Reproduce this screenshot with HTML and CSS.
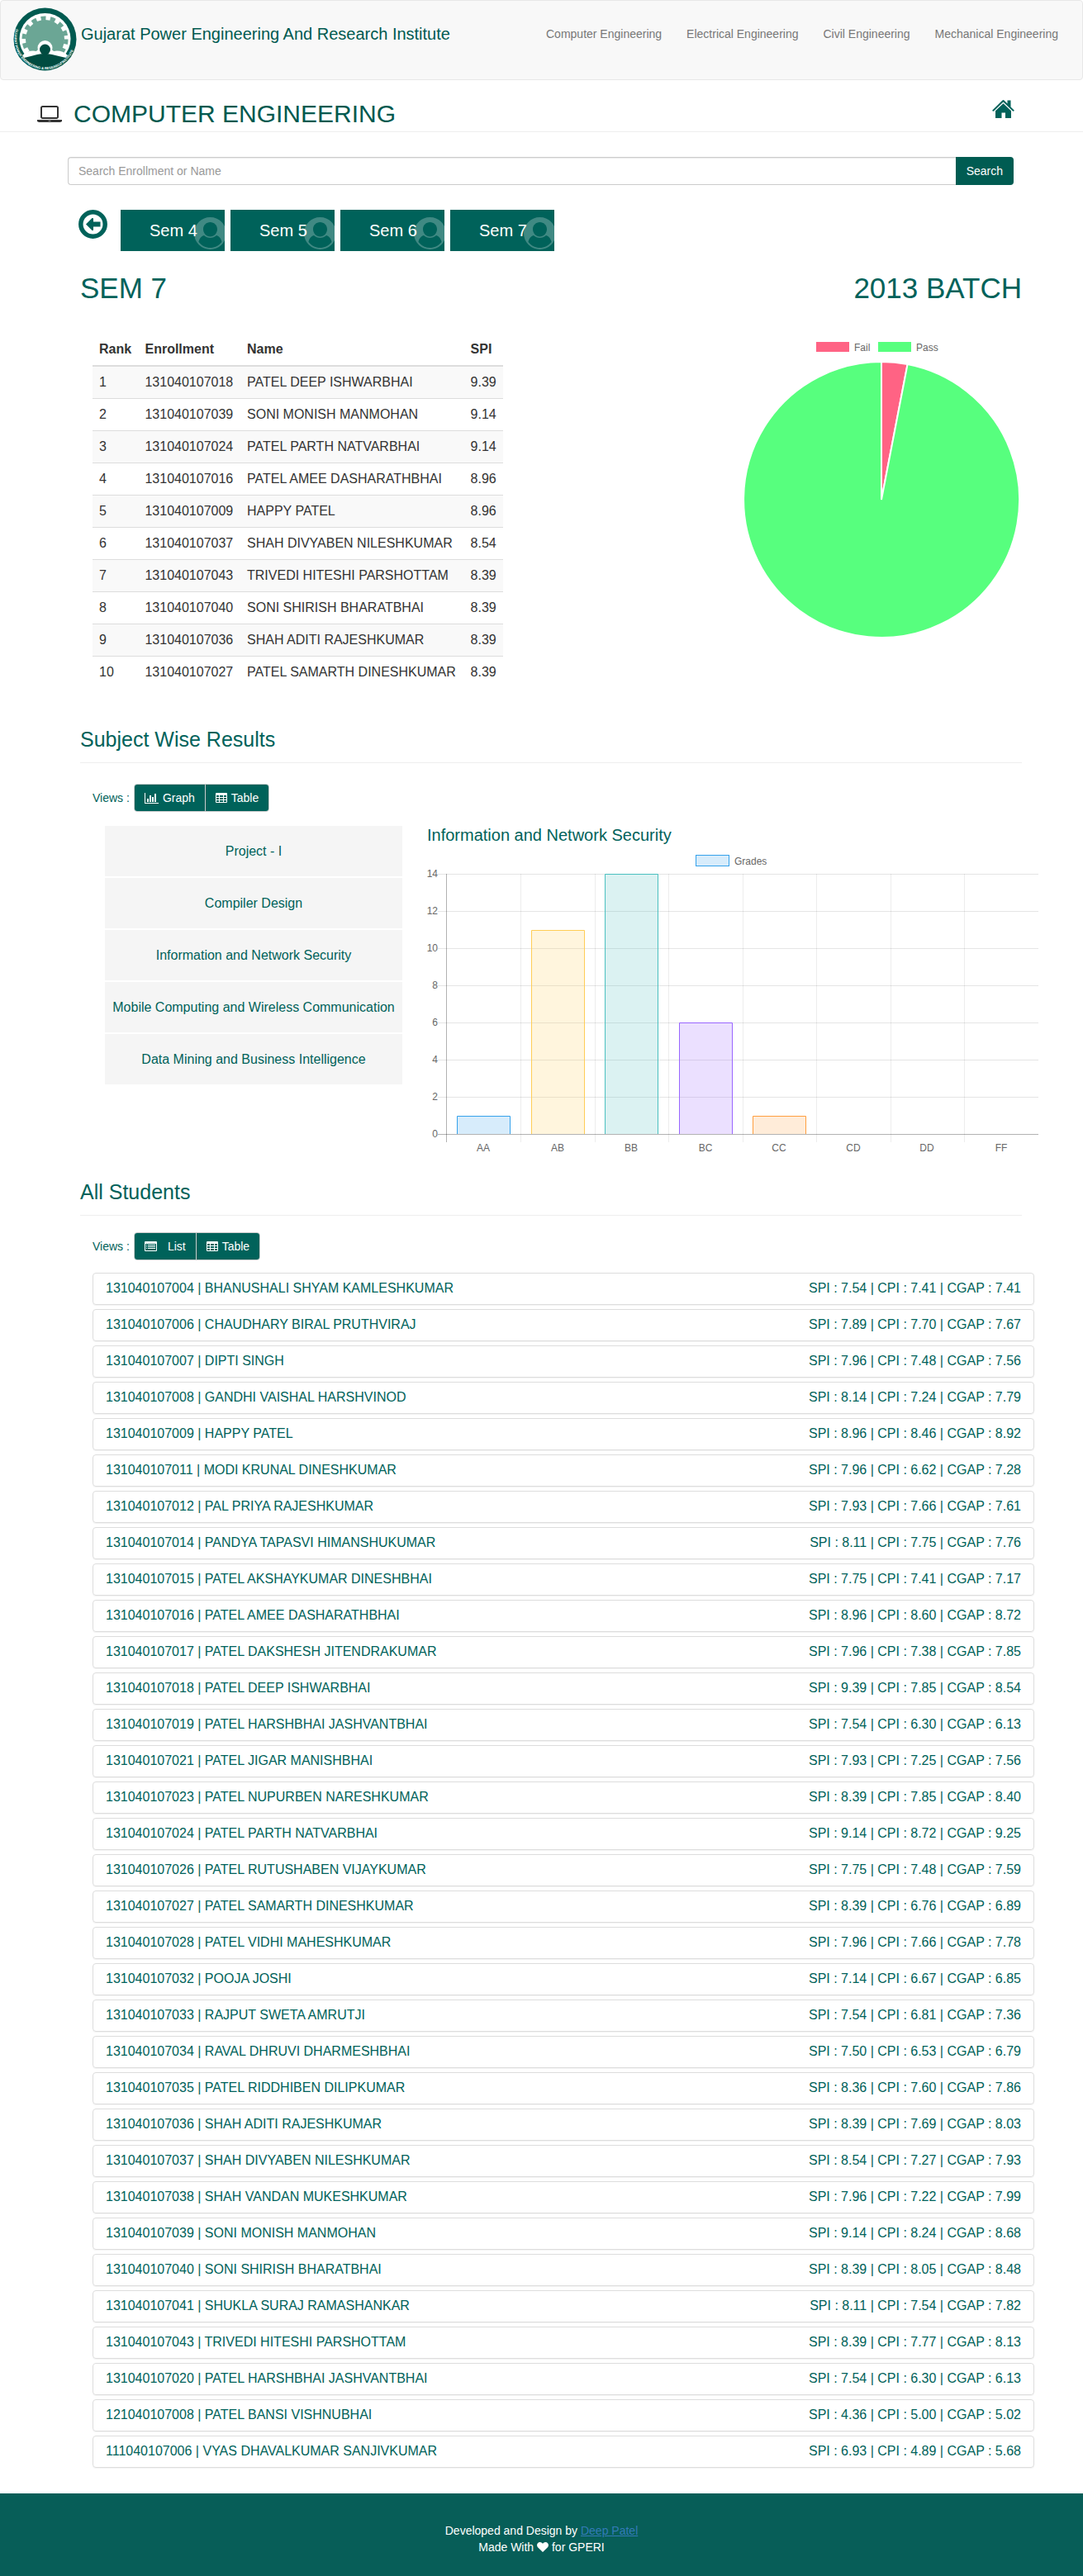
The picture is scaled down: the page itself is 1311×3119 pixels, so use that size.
FILE: index.html
```html
<!DOCTYPE html>
<html lang="en">
<head>
<meta charset="utf-8">
<meta name="viewport" content="width=device-width, initial-scale=1">
<title>Computer Engineering - GPERI Results</title>
<link rel="stylesheet" href="styles.css">
</head>
<body>
<svg class="defs" width="0" height="0" aria-hidden="true">
  <symbol id="person" viewBox="0 0 39 39">
    <path fill-rule="evenodd" d="M19.500 0A19.500 19.500 0 1 0 19.500 39A19.500 19.500 0 1 0 19.500 0ZM19.500 6C24 6 28 9.500 28 14.500C28 19.500 24 23.500 19.500 23.500C15 23.500 11 19.500 11 14.500C11 9.500 15 6 19.500 6ZM12 22C16 26 23 26 27 22C31 23 33 27 33.500 30C30 34.500 25 37 19.500 37C14 37 9 34.500 5.500 30C6 27 8 23 12 22Z"/>
  </symbol>
  <symbol id="grid" viewBox="0 0 14 12">
    <path fill-rule="evenodd" d="M1 0H13Q14 0 14 1V11Q14 12 13 12H1Q0 12 0 11V1Q0 0 1 0ZM1 3H4V5H1ZM5 3H9V5H5ZM10 3H13V5H10ZM1 6H4V8H1ZM5 6H9V8H5ZM10 6H13V8H10ZM1 9H4V11H1ZM5 9H9V11H5ZM10 9H13V11H10Z"/>
  </symbol>
</svg>

<header class="navbar">
  <a class="brand" href="#">
    <svg class="logo" viewBox="0 0 77 77" aria-hidden="true">
      <defs><path id="ring" d="M3.500 26A37 37 0 1 0 73.500 26"/></defs>
      <circle cx="38.500" cy="38.500" r="38" fill="#005a50"/>
      <ellipse cx="38.500" cy="38" rx="31" ry="31" fill="#fff"/>
      <circle cx="38.500" cy="38.500" r="23.500" fill="#6ba695"/>
      <circle cx="38.500" cy="38.500" r="25.500" fill="none" stroke="#6ba695" stroke-width="5" stroke-dasharray="6 5.440"/>
      <path d="M11 58Q19 51 28 53Q38 42 49 53Q58 51 66 58L58 67H18Z" fill="#fff"/>
      <circle cx="38.500" cy="49" r="9" fill="#fff"/>
      <path d="M13 61Q22 59 29 57Q38 55 47 57Q55 59 64 61Q56 70 38 73Q21 71 13 61Z" fill="#004c41"/>
      <circle cx="38.500" cy="51" r="6.500" fill="#004c41"/>
      <text class="logo-text"><textPath href="#ring">GUJARAT POWER ENGINEERING &amp; RESEARCH INSTITUTE</textPath></text>
    </svg>
    <span>Gujarat Power Engineering And Research Institute</span>
  </a>
  <nav class="nav-links">
    <a href="#">Computer Engineering</a>
    <a href="#">Electrical Engineering</a>
    <a href="#">Civil Engineering</a>
    <a href="#">Mechanical Engineering</a>
  </nav>
</header>

<div class="page-title">
  <svg class="laptop" viewBox="0 128 1920 1280" aria-hidden="true"><path d="M416 1152q-66 0-113-47t-47-113v-704q0-66 47-113t113-47h1088q66 0 113 47t47 113v704q0 66-47 113t-113 47h-1088zm-32-864v704q0 13 9.500 22.500t22.500 9.500h1088q13 0 22.500-9.500t9.500-22.500v-704q0-13-9.500-22.500t-22.500-9.500h-1088q-13 0-22.500 9.500t-9.500 22.500zm1376 928h160v96q0 40-47 68t-113 28h-1600q-66 0-113-28t-47-68v-96h1760zm-720 96q16 0 16-16t-16-16h-160q-16 0-16 16t16 16h160z"/></svg>
  <h1>COMPUTER ENGINEERING</h1>
  <a class="home" href="#" aria-label="Home"><svg viewBox="0 0 27 22"><path d="M12.500.500Q13.500-.300 14.500.500L18.500 4.500V.500H22.500V8.500L26.700 12.500Q27 14 25 13.500L13.500 2.600L2 13.500Q0 14 .300 12.500ZM13.500 4.200L23 13.200V22H16V15.500H11.500V22H4V13.200Z"/></svg></a>
</div>

<form class="search">
  <input type="text" placeholder="Search Enrollment or Name" aria-label="Search Enrollment or Name">
  <button type="button">Search</button>
</form>

<nav class="semesters">
  <a class="back" href="#" aria-label="Back"><svg viewBox="0 0 35 35"><circle cx="17.500" cy="17.500" r="14.700" fill="none" stroke="currentColor" stroke-width="5.500"/><path d="M9 17.500L16.500 10Q18 9.500 18 11V14.500H26.500V20.500H18V24Q18 25.500 16.500 25Z"/></svg></a>
  <a class="sem" href="#">Sem 4<svg><use href="#person"/></svg></a>
  <a class="sem" href="#">Sem 5<svg><use href="#person"/></svg></a>
  <a class="sem" href="#">Sem 6<svg><use href="#person"/></svg></a>
  <a class="sem" href="#">Sem 7<svg><use href="#person"/></svg></a>
</nav>

<main>
  <div class="batch">
    <h2>SEM 7</h2>
    <h2>2013 BATCH</h2>
  </div>

  <section class="overview">
    <table class="ranks">
      <thead><tr><th>Rank</th><th>Enrollment</th><th>Name</th><th>SPI</th></tr></thead>
      <tbody>
        <tr><td>1</td><td>131040107018</td><td>PATEL DEEP ISHWARBHAI</td><td>9.39</td></tr>
        <tr><td>2</td><td>131040107039</td><td>SONI MONISH MANMOHAN</td><td>9.14</td></tr>
        <tr><td>3</td><td>131040107024</td><td>PATEL PARTH NATVARBHAI</td><td>9.14</td></tr>
        <tr><td>4</td><td>131040107016</td><td>PATEL AMEE DASHARATHBHAI</td><td>8.96</td></tr>
        <tr><td>5</td><td>131040107009</td><td>HAPPY PATEL</td><td>8.96</td></tr>
        <tr><td>6</td><td>131040107037</td><td>SHAH DIVYABEN NILESHKUMAR</td><td>8.54</td></tr>
        <tr><td>7</td><td>131040107043</td><td>TRIVEDI HITESHI PARSHOTTAM</td><td>8.39</td></tr>
        <tr><td>8</td><td>131040107040</td><td>SONI SHIRISH BHARATBHAI</td><td>8.39</td></tr>
        <tr><td>9</td><td>131040107036</td><td>SHAH ADITI RAJESHKUMAR</td><td>8.39</td></tr>
        <tr><td>10</td><td>131040107027</td><td>PATEL SAMARTH DINESHKUMAR</td><td>8.39</td></tr>
      </tbody>
    </table>
    <svg class="pie" viewBox="0 0 340 370" role="img" aria-label="Pass and fail share">
      <rect x="91" y="10" width="40" height="12" fill="#ff6384"/><text x="137" y="21">Fail</text>
      <rect x="166" y="10" width="40" height="12" fill="#57ff7e"/><text x="212" y="21">Pass</text>
      <g stroke="#fff" stroke-width="2">
        <path fill="#ff6384" d="M170 201V34A167 167 0 0 1 201.600 37Z"/>
        <path fill="#57ff7e" d="M170 201L201.600 37A167 167 0 1 1 170 34Z"/>
      </g>
    </svg>
  </section>

  <h3>Subject Wise Results</h3>
  <div class="views views-subject">
    <span>Views :</span>
    <div class="group">
      <button type="button"><svg width="17" height="13" viewBox="0 0 17 13"><path d="M0 0H1V12H17V13H0ZM3 7H5V11H3ZM6 3H8V11H6ZM9 5H11V11H9ZM12 1H14V11H12Z"/></svg>Graph</button>
      <button type="button"><svg width="14" height="12"><use href="#grid"/></svg>Table</button>
    </div>
  </div>

  <section class="subjects">
    <nav class="subject-list">
      <a href="#">Project - I</a>
      <a href="#">Compiler Design</a>
      <a href="#">Information and Network Security</a>
      <a href="#">Mobile Computing and Wireless Communication</a>
      <a href="#">Data Mining and Business Intelligence</a>
    </nav>
    <div class="chart">
      <h4>Information and Network Security</h4>
      <svg viewBox="0 0 740 376" role="img" aria-label="Grades for Information and Network Security">
        <rect x="325.500" y="13.500" width="40" height="13" fill="#d7ecfb" stroke="#36a2eb"/>
        <text x="372" y="25">Grades</text>
        <path class="lines" d="M13 36.500H740M13 81.500H740M13 126.500H740M13 171.500H740M13 216.500H740M13 261.500H740M13 306.500H740"/>
        <path class="lines faint" d="M113.500 36V361M203.500 36V361M292.500 36V361M382.500 36V361M471.500 36V361M561.500 36V361M650.500 36V361"/>
        <path class="axis" d="M13 351.500H740M23.500 36V361"/>
        <g class="bars">
          <path fill="#36a2eb" stroke="#36a2eb" d="M36.500 351V329.500H100.500V351"/>
          <path fill="#ffcd56" stroke="#ffcd56" d="M126.500 351V104.500H190.500V351"/>
          <path fill="#4bc0c0" stroke="#4bc0c0" d="M215.500 351V36.500H279.500V351"/>
          <path fill="#9966ff" stroke="#9966ff" d="M305.500 351V216.500H369.500V351"/>
          <path fill="#ff9f40" stroke="#ff9f40" d="M394.500 351V329.500H458.500V351"/>
        </g>
        <g text-anchor="end">
          <text x="13" y="40">14</text><text x="13" y="85">12</text><text x="13" y="130">10</text><text x="13" y="175">8</text>
          <text x="13" y="220">6</text><text x="13" y="265">4</text><text x="13" y="310">2</text><text x="13" y="355">0</text>
        </g>
        <g text-anchor="middle">
          <text x="68" y="372">AA</text><text x="158" y="372">AB</text><text x="247" y="372">BB</text><text x="337" y="372">BC</text>
          <text x="426" y="372">CC</text><text x="516" y="372">CD</text><text x="605" y="372">DD</text><text x="695" y="372">FF</text>
        </g>
      </svg>
    </div>
  </section>

  <h3>All Students</h3>
  <div class="views">
    <span>Views :</span>
    <div class="group">
      <button type="button" class="list-button"><svg width="15" height="12" viewBox="0 0 15 12"><path fill-rule="evenodd" d="M1 0H14Q15 0 15 1V11Q15 12 14 12H1Q0 12 0 11V1Q0 0 1 0ZM1 3V11H14V3ZM2 4H3V5H2ZM4 4H13V5H4ZM2 6H3V7H2ZM4 6H13V7H4ZM2 8H3V9H2ZM4 8H13V9H4Z"/></svg>List</button>
      <button type="button"><svg width="14" height="12"><use href="#grid"/></svg>Table</button>
    </div>
  </div>

  <ul class="students">
    <li><a href="#">131040107004 | BHANUSHALI SHYAM KAMLESHKUMAR</a><span>SPI : 7.54 | CPI : 7.41 | CGAP : 7.41</span></li>
    <li><a href="#">131040107006 | CHAUDHARY BIRAL PRUTHVIRAJ</a><span>SPI : 7.89 | CPI : 7.70 | CGAP : 7.67</span></li>
    <li><a href="#">131040107007 | DIPTI SINGH</a><span>SPI : 7.96 | CPI : 7.48 | CGAP : 7.56</span></li>
    <li><a href="#">131040107008 | GANDHI VAISHAL HARSHVINOD</a><span>SPI : 8.14 | CPI : 7.24 | CGAP : 7.79</span></li>
    <li><a href="#">131040107009 | HAPPY PATEL</a><span>SPI : 8.96 | CPI : 8.46 | CGAP : 8.92</span></li>
    <li><a href="#">131040107011 | MODI KRUNAL DINESHKUMAR</a><span>SPI : 7.96 | CPI : 6.62 | CGAP : 7.28</span></li>
    <li><a href="#">131040107012 | PAL PRIYA RAJESHKUMAR</a><span>SPI : 7.93 | CPI : 7.66 | CGAP : 7.61</span></li>
    <li><a href="#">131040107014 | PANDYA TAPASVI HIMANSHUKUMAR</a><span>SPI : 8.11 | CPI : 7.75 | CGAP : 7.76</span></li>
    <li><a href="#">131040107015 | PATEL AKSHAYKUMAR DINESHBHAI</a><span>SPI : 7.75 | CPI : 7.41 | CGAP : 7.17</span></li>
    <li><a href="#">131040107016 | PATEL AMEE DASHARATHBHAI</a><span>SPI : 8.96 | CPI : 8.60 | CGAP : 8.72</span></li>
    <li><a href="#">131040107017 | PATEL DAKSHESH JITENDRAKUMAR</a><span>SPI : 7.96 | CPI : 7.38 | CGAP : 7.85</span></li>
    <li><a href="#">131040107018 | PATEL DEEP ISHWARBHAI</a><span>SPI : 9.39 | CPI : 7.85 | CGAP : 8.54</span></li>
    <li><a href="#">131040107019 | PATEL HARSHBHAI JASHVANTBHAI</a><span>SPI : 7.54 | CPI : 6.30 | CGAP : 6.13</span></li>
    <li><a href="#">131040107021 | PATEL JIGAR MANISHBHAI</a><span>SPI : 7.93 | CPI : 7.25 | CGAP : 7.56</span></li>
    <li><a href="#">131040107023 | PATEL NUPURBEN NARESHKUMAR</a><span>SPI : 8.39 | CPI : 7.85 | CGAP : 8.40</span></li>
    <li><a href="#">131040107024 | PATEL PARTH NATVARBHAI</a><span>SPI : 9.14 | CPI : 8.72 | CGAP : 9.25</span></li>
    <li><a href="#">131040107026 | PATEL RUTUSHABEN VIJAYKUMAR</a><span>SPI : 7.75 | CPI : 7.48 | CGAP : 7.59</span></li>
    <li><a href="#">131040107027 | PATEL SAMARTH DINESHKUMAR</a><span>SPI : 8.39 | CPI : 6.76 | CGAP : 6.89</span></li>
    <li><a href="#">131040107028 | PATEL VIDHI MAHESHKUMAR</a><span>SPI : 7.96 | CPI : 7.66 | CGAP : 7.78</span></li>
    <li><a href="#">131040107032 | POOJA JOSHI</a><span>SPI : 7.14 | CPI : 6.67 | CGAP : 6.85</span></li>
    <li><a href="#">131040107033 | RAJPUT SWETA AMRUTJI</a><span>SPI : 7.54 | CPI : 6.81 | CGAP : 7.36</span></li>
    <li><a href="#">131040107034 | RAVAL DHRUVI DHARMESHBHAI</a><span>SPI : 7.50 | CPI : 6.53 | CGAP : 6.79</span></li>
    <li><a href="#">131040107035 | PATEL RIDDHIBEN DILIPKUMAR</a><span>SPI : 8.36 | CPI : 7.60 | CGAP : 7.86</span></li>
    <li><a href="#">131040107036 | SHAH ADITI RAJESHKUMAR</a><span>SPI : 8.39 | CPI : 7.69 | CGAP : 8.03</span></li>
    <li><a href="#">131040107037 | SHAH DIVYABEN NILESHKUMAR</a><span>SPI : 8.54 | CPI : 7.27 | CGAP : 7.93</span></li>
    <li><a href="#">131040107038 | SHAH VANDAN MUKESHKUMAR</a><span>SPI : 7.96 | CPI : 7.22 | CGAP : 7.99</span></li>
    <li><a href="#">131040107039 | SONI MONISH MANMOHAN</a><span>SPI : 9.14 | CPI : 8.24 | CGAP : 8.68</span></li>
    <li><a href="#">131040107040 | SONI SHIRISH BHARATBHAI</a><span>SPI : 8.39 | CPI : 8.05 | CGAP : 8.48</span></li>
    <li><a href="#">131040107041 | SHUKLA SURAJ RAMASHANKAR</a><span>SPI : 8.11 | CPI : 7.54 | CGAP : 7.82</span></li>
    <li><a href="#">131040107043 | TRIVEDI HITESHI PARSHOTTAM</a><span>SPI : 8.39 | CPI : 7.77 | CGAP : 8.13</span></li>
    <li><a href="#">131040107020 | PATEL HARSHBHAI JASHVANTBHAI</a><span>SPI : 7.54 | CPI : 6.30 | CGAP : 6.13</span></li>
    <li><a href="#">121040107008 | PATEL BANSI VISHNUBHAI</a><span>SPI : 4.36 | CPI : 5.00 | CGAP : 5.02</span></li>
    <li><a href="#">111040107006 | VYAS DHAVALKUMAR SANJIVKUMAR</a><span>SPI : 6.93 | CPI : 4.89 | CGAP : 5.68</span></li>
  </ul>
</main>

<footer>
  <p>Developed and Design by <a href="#">Deep Patel</a></p>
  <p>Made With <svg width="14" height="12" viewBox="0 0 14 12" role="img" aria-label="love"><path d="M7 12L1 6.200C-1 4 .300 0 3.700 0C5.500 0 6.500 1.200 7 2C7.500 1.200 8.500 0 10.300 0C13.700 0 15 4 13 6.200Z"/></svg> for GPERI</p>
</footer>
</body>
</html>
```
FILE: styles.css
```css
* { box-sizing: border-box; }

body {
  margin: 0;
  background: #fff;
  color: #333;
  font: 14px/20px "Liberation Sans", Arial, sans-serif;
}

h1, h2, h3, h4, p, ul { margin: 0; padding: 0; font-weight: 400; }
a { color: inherit; text-decoration: none; }
svg { fill: currentColor; }
.defs { position: absolute; }

.navbar {
  display: flex;
  justify-content: space-between;
  align-items: flex-start;
  height: 97px;
  padding: 8px 14px 0 15px;
  border: 1px solid #e7e7e7;
  border-radius: 4px;
  background: #f8f8f8;
}
.brand { display: flex; gap: 5px; color: #005a50; font-size: 20px; }
.brand span { padding-top: 22px; }
.logo { width: 77px; height: 77px; }
.logo-text { fill: #fff; font-size: 4px; font-weight: 700; }
.nav-links { display: flex; padding-top: 22px; color: #777; }
.nav-links a { padding: 0 15px; }

.page-title {
  display: flex;
  align-items: flex-start;
  margin-top: 24px;
  padding: 0 83px 5px 45px;
  border-bottom: 1px solid #eee;
}
.laptop { width: 30px; height: 20px; margin: 7px 14px 0 0; }
.page-title h1 { color: #00594f; font-size: 30px; line-height: 33px; }
.home { margin-left: auto; color: #00625a; }
.home svg { display: block; width: 27px; height: 22px; }

.search { display: flex; margin: 30px 84px 0 82px; }
.search input {
  flex: 1;
  height: 34px;
  padding: 6px 12px;
  border: 1px solid #ccc;
  border-right: 0;
  border-radius: 4px 0 0 4px;
  box-shadow: inset 0 1px 1px rgba(0, 0, 0, .08);
  font: inherit;
}
.search input::placeholder { color: #999; }
.search button {
  padding: 0 13px;
  border: 0;
  border-radius: 0 4px 4px 0;
  background: #005c52;
  color: #fff;
  font: inherit;
}

.semesters { display: flex; gap: 7px; margin-top: 30px; padding-left: 95px; }
.back { margin-right: 9px; color: #00625a; }
.back svg { display: block; width: 35px; height: 35px; }
.sem {
  position: relative;
  overflow: hidden;
  width: 126px;
  padding-left: 35px;
  background: #00625a;
  color: #fff;
  font-size: 20px;
  line-height: 50px;
  white-space: nowrap;
}
.sem svg {
  position: absolute;
  right: -2px;
  top: 9px;
  width: 39px;
  height: 39px;
  opacity: .25;
}

.batch {
  display: flex;
  justify-content: space-between;
  margin-top: 25px;
  padding: 0 74px 0 97px;
  color: #00625a;
}
.batch h2 { font-size: 35px; line-height: 39px; }

.overview {
  display: flex;
  justify-content: space-between;
  align-items: flex-start;
  margin-top: 36px;
  padding: 0 74px 0 112px;
}
.ranks { width: 497px; border-spacing: 0; font-size: 16px; line-height: 22px; }
.ranks th, .ranks td { padding: 8px; text-align: left; }
.ranks th { border-bottom: 2px solid #ddd; }
.ranks tr + tr td { border-top: 1px solid #ddd; }
.ranks tbody tr:nth-child(odd) { background: #f9f9f9; }
.pie { width: 340px; height: 370px; }
.pie text, .chart text { fill: #666; font-size: 12px; }

h3 {
  margin: 48px 74px 0 97px;
  padding-bottom: 14px;
  border-bottom: 1px solid #eee;
  color: #00625a;
  font-size: 25px;
  line-height: 28px;
}

.views {
  display: flex;
  align-items: center;
  gap: 5px;
  margin-top: 20px;
  padding-left: 112px;
  color: #00625a;
}
.views-subject { margin-top: 25px; }
.group { display: flex; border: 1px solid #ccc; border-radius: 4px; overflow: hidden; }
.group button {
  display: flex;
  align-items: center;
  gap: 5px;
  height: 32px;
  padding: 0 12px;
  border: 0;
  background: #00625a;
  color: #fff;
  font: inherit;
}
.group button + button { border-left: 1px solid #ccc; }
.group .list-button { gap: 13px; }

.subjects {
  display: grid;
  grid-template-columns: 360px 1fr;
  gap: 30px;
  margin-top: 17px;
  padding: 0 54px 0 127px;
}
.subject-list { display: grid; gap: 2px; align-content: start; }
.subject-list a {
  background: #f5f5f5;
  color: #00625a;
  font-size: 16px;
  line-height: 61px;
  text-align: center;
}
.chart h4 { color: #00625a; font-size: 20px; line-height: 22px; }
.chart svg { display: block; width: 100%; }
.lines { fill: none; stroke: rgba(0, 0, 0, .1); }
.faint { stroke: rgba(0, 0, 0, .07); }
.axis { fill: none; stroke: rgba(0, 0, 0, .3); }
.bars { fill-opacity: .2; }
.subjects + h3 { margin-top: 31px; }

.students { margin: 15px 59px 0 112px; list-style: none; }
.students li {
  display: flex;
  justify-content: space-between;
  margin-bottom: 5px;
  padding: 7px 15px 8px;
  border: 1px solid #ddd;
  border-radius: 4px;
  box-shadow: 0 1px 1px rgba(0, 0, 0, .05);
  color: #00625a;
  font-size: 16px;
  line-height: 22px;
}
.students li:last-child { margin-bottom: 0; }

footer {
  margin-top: 31px;
  padding: 35px 0 25px;
  background: #075e58;
  color: #fff;
  text-align: center;
}
footer a { color: #337ab7; text-decoration: underline; }
footer svg { vertical-align: -1px; }
```
